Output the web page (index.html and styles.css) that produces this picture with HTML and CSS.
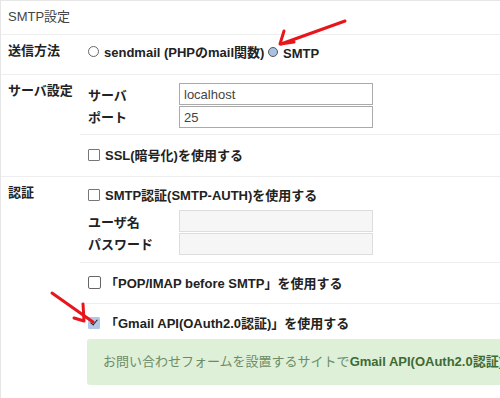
FILE: index.html
```html
<!DOCTYPE html>
<html lang="ja">
<head>
    <meta charset="UTF-8">
    <title>SMTP設定</title>
    <link rel="stylesheet" href="styles.css">
</head>
<body>
    <div class="panel">
        <div class="panel-title">SMTP設定</div>

        <div class="row">
            <div class="row-label">送信方法</div>
            <div class="row-body">
                <div class="block block-method">
                    <label class="opt"><span class="radio"></span>sendmail (PHPのmail関数)</label>
                    <label class="opt"><span class="radio checked"></span>SMTP</label>
                </div>
            </div>
        </div>

        <div class="row">
            <div class="row-label">サーバ設定</div>
            <div class="row-body">
                <div class="block block-fields">
                    <div class="field">
                        <span class="field-name">サーバ</span>
                        <input class="text" type="text" value="localhost">
                    </div>
                    <div class="field">
                        <span class="field-name">ポート</span>
                        <input class="text" type="text" value="25">
                    </div>
                </div>
                <div class="block block-check">
                    <label class="opt"><span class="check"></span>SSL(暗号化)を使用する</label>
                </div>
            </div>
        </div>

        <div class="row">
            <div class="row-label">認証</div>
            <div class="row-body">
                <div class="block block-auth">
                    <label class="opt"><span class="check"></span>SMTP認証(SMTP-AUTH)を使用する</label>
                    <div class="auth-fields">
                        <div class="field">
                            <span class="field-name">ユーザ名</span>
                            <input class="text" type="text" disabled>
                        </div>
                        <div class="field">
                            <span class="field-name">パスワード</span>
                            <input class="text" type="password" disabled>
                        </div>
                    </div>
                </div>
                <div class="block block-check">
                    <label class="opt"><span class="check big"></span>「POP/IMAP before SMTP」を使用する</label>
                </div>
                <div class="block block-gmail">
                    <label class="opt"><span class="check checked"></span>「Gmail API(OAuth2.0認証)」を使用する</label>
                    <div class="notice">お問い合わせフォームを設置するサイトで<b>Gmail API(OAuth2.0認証)</b>で送信するには</div>
                </div>
            </div>
        </div>
    </div>

    <!-- annotation arrows -->
    <svg class="arrows" width="500" height="398" viewBox="0 0 500 398">
        <g fill="none" stroke="#e8151b" stroke-width="3" stroke-linecap="round" stroke-linejoin="round">
            <path d="M345 21 L281 44"/>
            <path d="M284 31 L280 44 L294 42"/>
            <path d="M52 293 L93 322"/>
            <path d="M83 304 L84 321 L74 318"/>
        </g>
    </svg>
</body>
</html>
```

FILE: styles.css
```css
body {
    margin: 0;
    padding: 0;
    background-color: #fff;
    color: #222;
    font-family: "Liberation Sans", "Noto Sans CJK JP", sans-serif;
    font-size: 13px;
    overflow: hidden;
}
.panel {
    width: 640px;
    border-top: 1px solid #e6e6e6;
    border-left: 1px solid #e6e6e6;
}
.panel-title {
    height: 33px;
    line-height: 32px;
    padding-left: 7px;
    color: #444;
    border-bottom: 1px solid #eee;
}
.row {
    display: flex;
    border-bottom: 1px solid #eee;
}
.row-label {
    width: 72px;
    padding: 7px 0 0 7px;
    line-height: 17px;
    font-weight: bold;
}
.row-body {
    flex: 1;
}
.block {
    padding: 0 8px;
    border-bottom: 1px solid #eee;
}
.block:last-child {
    border-bottom: none;
}
.opt {
    display: inline-flex;
    align-items: center;
    font-weight: bold;
    line-height: 20px;
}
.radio {
    width: 9px;
    height: 9px;
    border: 1px solid #666;
    border-radius: 50%;
    margin-right: 5px;
    margin-top: -3px;
}
.radio.checked {
    background-color: #a9c2e3;
    border: 1.5px solid #555;
    width: 8px;
    height: 8px;
}
.check {
    width: 10px;
    height: 10px;
    border: 1px solid #777;
    border-radius: 1px;
    margin-right: 5px;
    margin-top: -2px;
}
.check.big {
    width: 11px;
    height: 11px;
    border-color: #666;
    border-radius: 2px;
    margin-right: 4px;
}
.check.checked {
    position: relative;
    background-color: #b3c8e6;
    border-color: #b3c8e6;
    margin-right: 5px;
}
.check.checked::after {
    content: "";
    position: absolute;
    left: 3px;
    top: 0px;
    width: 3px;
    height: 6px;
    border: solid #222;
    border-width: 0 1.5px 1.5px 0;
    transform: rotate(40deg);
}
.block-method {
    height: 39px;
    padding-top: 8px;
    box-sizing: border-box;
}
.block-fields {
    padding-top: 8px;
    height: 60px;
    box-sizing: border-box;
}
.field {
    display: flex;
    align-items: center;
    font-weight: bold;
}
.field-name {
    width: 91px;
}
.text {
    width: 194px;
    height: 22px;
    box-sizing: border-box;
    margin: 0;
    padding: 0 4px;
    border: 1px solid #aaa;
    border-radius: 0;
    font-family: "Liberation Sans", "Noto Sans CJK JP", sans-serif;
    font-size: 13px;
    color: #444;
    background-color: #fff;
}
.field + .field .text {
    margin-top: 1px;
}
.text:disabled {
    background-color: #f6f6f6;
    border-color: #ddd;
}
.block-check {
    height: 41px;
    display: flex;
    align-items: center;
    padding-top: 1px;
    box-sizing: border-box;
}
.block-auth {
    padding-top: 9px;
    height: 86px;
    box-sizing: border-box;
}
.auth-fields {
    margin-top: 4px;
}
.block-gmail {
    padding-top: 10px;
    padding-bottom: 30px;
}
.notice {
    margin: 5px 0 0 -1px;
    height: 46px;
    line-height: 46px;
    padding-left: 16px;
    background-color: #dff0d8;
    border-radius: 3px;
    color: #6d8c66;
    white-space: nowrap;
    overflow: hidden;
}
.notice b {
    color: #3d6b35;
}
.arrows {
    position: absolute;
    left: 0;
    top: 0;
    pointer-events: none;
}
```
